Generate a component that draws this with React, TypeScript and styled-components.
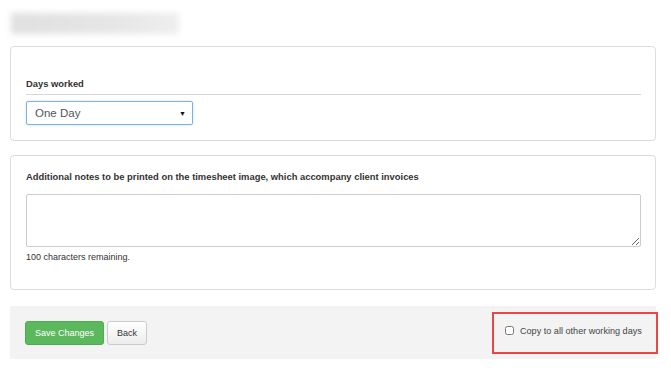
import React, {useState} from "react"
import styled, {createGlobalStyle} from "styled-components"

const GlobalStyle = createGlobalStyle`
    body {
        margin: 0;
        background: #ffffff;
        font-family: "Liberation Sans", Arial, sans-serif;
        color: #333333;
    }
`

const Page = styled.div`
    width: 646px;
    padding: 13px 0 0 10px;
`

const TitleBlur = styled.div`
    width: 168px;
    height: 21px;
    margin-left: 1px;
    background: linear-gradient(90deg, #e0e0e0 0%, #e6e6e6 60%, #eeeeee 100%);
    filter: blur(3px);
`

const Panel = styled.div<{ $top: number; $padTop: number; $padBottom: number }>`
    margin-top: ${p => p.$top}px;
    border: 1px solid #dcdcdc;
    border-radius: 4px;
    padding: ${p => p.$padTop}px 14px ${p => p.$padBottom}px 15px;
`

const Label = styled.div`
    font-size: 9.4px;
    font-weight: bold;
    line-height: 12px;
    color: #333333;
`

const Rule = styled.div`
    height: 1px;
    background: #d6d6d6;
    margin: 4px 0 6px;
`

const SelectBox = styled.div`
    box-sizing: border-box;
    width: 167px;
    height: 24px;
    border: 1px solid #7fb2e3;
    border-radius: 2px;
    box-shadow: 0 0 2px rgba(102, 175, 233, 0.5);
    display: flex;
    align-items: center;
    padding-left: 8px;
    font-size: 11.5px;
    color: #555555;
`

const Arrow = styled.span`
    margin-left: auto;
    margin-right: 6px;
    font-size: 7px;
    color: #111111;
`

const TextArea = styled.textarea`
    display: block;
    box-sizing: border-box;
    width: 100%;
    height: 53px;
    margin-top: 11px;
    border: 1px solid #cccccc;
    border-radius: 2px;
    font-family: inherit;
    font-size: 10px;
    resize: vertical;
`

const Hint = styled.div`
    font-size: 9px;
    line-height: 11px;
    margin-top: 5px;
    color: #333333;
`

const Footer = styled.div`
    margin-top: 16px;
    height: 53px;
    background: #f3f3f3;
    display: flex;
    align-items: center;
    justify-content: space-between;
    padding-left: 15px;
`

const Buttons = styled.div`
    display: flex;
    gap: 3px;
`

const Button = styled.button<{ $primary?: boolean }>`
    height: 24px;
    padding: 0 9px;
    border-radius: 3px;
    font-family: inherit;
    font-size: 9px;
    border: 1px solid ${p => p.$primary ? "#4cae4c" : "#cccccc"};
    background: ${p => p.$primary ? "#5cb85c" : "linear-gradient(#ffffff, #ececec)"};
    color: ${p => p.$primary ? "#ffffff" : "#333333"};
`

const CopyBox = styled.label`
    box-sizing: border-box;
    width: 166px;
    height: 42px;
    margin-right: -2px;
    border: 2px solid #f04444;
    display: flex;
    align-items: center;
    gap: 6px;
    padding: 0 0 4px 11px;
    font-size: 9.1px;
    color: #444444;
`

const Check = styled.input`
    width: 9px;
    height: 9px;
    margin: 0;
`

export default function App() {
    const [notes, setNotes] = useState("")
    const [copy, setCopy] = useState(false)

    return (<Page>
        <GlobalStyle/>
        <TitleBlur/>
        <Panel $top={12} $padTop={31} $padBottom={15}>
            <Label>Days worked</Label>
            <Rule/>
            <SelectBox>One Day<Arrow>▼</Arrow></SelectBox>
        </Panel>
        <Panel $top={14} $padTop={15} $padBottom={26}>
            <Label>Additional notes to be printed on the timesheet image, which accompany client invoices</Label>
            <TextArea value={notes} maxLength={100} onChange={e => setNotes(e.target.value)}/>
            <Hint>{100 - notes.length} characters remaining.</Hint>
        </Panel>
        <Footer>
            <Buttons>
                <Button $primary>Save Changes</Button>
                <Button>Back</Button>
            </Buttons>
            <CopyBox>
                <Check type="checkbox" checked={copy} onChange={() => setCopy(!copy)}/>
                Copy to all other working days
            </CopyBox>
        </Footer>
    </Page>)
}
